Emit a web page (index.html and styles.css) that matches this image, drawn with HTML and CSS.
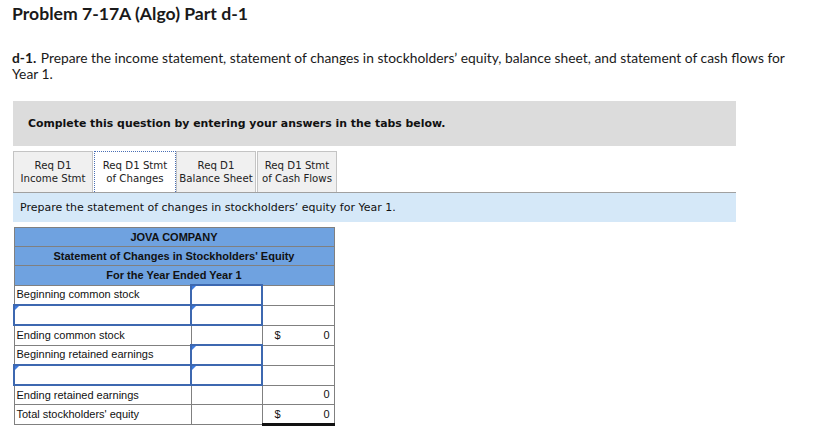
FILE: index.html
```html
<!DOCTYPE html>
<html lang="en">
<head>
<meta charset="utf-8">
<title>Problem 7-17A (Algo) Part d-1</title>
<link rel="stylesheet" href="styles.css">
</head>
<body>
<div class="page">
  <h1 class="title">Problem 7-17A (Algo) Part d-1</h1>
  <p class="prompt"><b class="lead">d-1.</b> Prepare the income statement, statement of changes in stockholders’ equity, balance sheet, and statement of cash flows for Year 1.</p>
  <div class="panel">
    <div class="notice">Complete this question by entering your answers in the tabs below.</div>
    <div class="tabs">
      <div class="tab t1">Req D1<br>Income Stmt</div>
      <div class="tab t2 active">Req D1 Stmt<br>of Changes</div>
      <div class="tab t3">Req D1<br>Balance Sheet</div>
      <div class="tab t4">Req D1 Stmt<br>of Cash Flows</div>
    </div>
    <div class="instruct">Prepare the statement of changes in stockholders’ equity for Year 1.</div>
    <table class="stmt">
      <colgroup><col class="c1"><col class="c2"><col class="c3"></colgroup>
      <tr class="hd"><th colspan="3">JOVA COMPANY</th></tr>
      <tr class="hd"><th colspan="3">Statement of Changes in Stockholders' Equity</th></tr>
      <tr class="hd"><th colspan="3">For the Year Ended Year 1</th></tr>
      <tr><td>Beginning common stock</td><td class="inp"></td><td></td></tr>
      <tr><td class="inp"></td><td class="inp"></td><td></td></tr>
      <tr><td>Ending common stock</td><td></td><td class="amt"><span>$</span><span>0</span></td></tr>
      <tr><td>Beginning retained earnings</td><td class="inp"></td><td></td></tr>
      <tr><td class="inp"></td><td class="inp"></td><td></td></tr>
      <tr><td>Ending retained earnings</td><td></td><td class="amt"><span></span><span>0</span></td></tr>
      <tr><td>Total stockholders' equity</td><td></td><td class="amt total"><span>$</span><span>0</span></td></tr>
    </table>
  </div>
</div>
</body>
</html>
```
FILE: styles.css
```css
html, body {
  margin: 0;
  padding: 0;
  background: #fff;
}
.page {
  padding-left: 12px;
  font-family: Lato, "Open Sans", sans-serif;
  color: #1a1a1a;
}
.title {
  margin: 0;
  padding-top: 4px;
  font-size: 17.6px;
  line-height: 20px;
  font-weight: 700;
  color: #1a1a1a;
}
.prompt {
  margin: 26px 0 0 0;
  width: 800px;
  font-size: 13.8px;
  line-height: 16px;
}
.lead {
  font-weight: 700;
  margin-right: 1px;
}
.panel {
  margin-top: 19px;
  margin-left: 1px;
  width: 723px;
}
.notice {
  height: 45px;
  display: flex;
  align-items: center;
  padding-left: 15px;
  background: #dcdcdc;
  font-family: "DejaVu Sans", Verdana, sans-serif;
  font-weight: 700;
  font-size: 10.9px;
  color: #111;
}
.tabs {
  display: flex;
  margin-top: 5px;
  height: 41px;
}
.tab {
  box-sizing: border-box;
  height: 41px;
  display: flex;
  align-items: center;
  justify-content: center;
  text-align: center;
  background: #f0f0f0;
  border: 1px solid #c4c4c4;
  border-bottom: none;
  font-family: "DejaVu Sans", Verdana, sans-serif;
  font-size: 10.2px;
  line-height: 13px;
  color: #222;
}
.t1 { width: 80px; }
.t2 { width: 82px; margin-left: 1px; }
.t3 { width: 80px; }
.t4 { width: 80px; margin-left: 1px; }
.tab.active {
  background: #fff;
  border: 1px dotted #4a6fb5;
  border-bottom: none;
}
.instruct {
  box-sizing: border-box;
  height: 30px;
  border-top: 1px solid #a0a0a0;
  background: #d5e8f8;
  display: flex;
  align-items: center;
  padding-left: 7px;
  font-family: "DejaVu Sans", Verdana, sans-serif;
  font-size: 11px;
  color: #111;
}
.stmt {
  margin-top: 5px;
  border-collapse: collapse;
  width: 320px;
  table-layout: fixed;
  font-family: "Liberation Sans", Arial, sans-serif;
  font-size: 11px;
  color: #111;
}
.c1 { width: 177px; }
.c2 { width: 71px; }
.c3 { width: 72px; }
.stmt th, .stmt td {
  border: 1px solid #808080;
  height: 18px;
  padding: 0 2px;
  line-height: 13px;
}
.stmt tr.hd th {
  background: #6fa2e0;
  font-weight: 700;
  text-align: center;
  height: 18px;
}
.stmt td.inp {
  position: relative;
  border: 2px solid #3d68b0;
}
.stmt td.inp::before {
  content: "";
  position: absolute;
  left: 0;
  top: 0;
  border-top: 4px solid #3d7be0;
  border-right: 4px solid transparent;
}
.stmt td.amt {
  padding: 0 4px 0 12px;
}
.amt span:first-child {
  float: left;
}
.amt span:last-child {
  float: right;
}
.stmt td.total {
  border-top: 1px solid #222;
  border-bottom: 3px solid #111;
}
```
